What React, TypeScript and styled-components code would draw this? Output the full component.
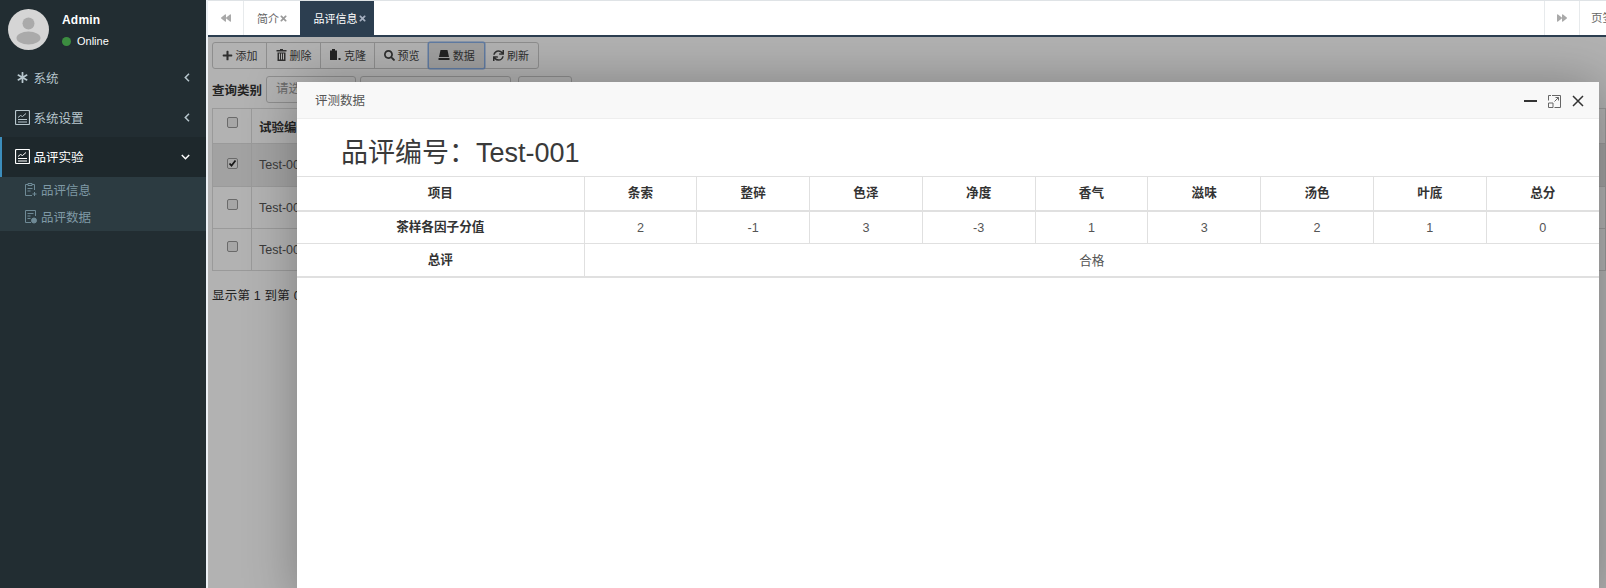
import React from "react";
import styled, { createGlobalStyle } from "styled-components";
import { FaBackward, FaForward, FaTimes, FaPlus, FaSearch, FaSync, FaAsterisk } from "react-icons/fa";

const FONT = `"Liberation Sans", "Noto Sans CJK SC", sans-serif`;

const Global = createGlobalStyle`
  html, body { margin: 0; padding: 0; height: 100%; overflow: hidden; background: #fff; }
  body { font-family: ${FONT}; font-size: 12.5px; color: #333; }
  #root { height: 100%; }
  * { box-sizing: border-box; }
`;

const Page = styled.div`
  display: flex;
  width: 1606px;
  height: 588px;
  overflow: hidden;
  background: #ecf0f5;
`;

const Sidebar = styled.aside`
  width: 206px;
  flex: none;
  background: #222d32;
  color: #b8c7ce;
`;

const UserPanel = styled.div`
  display: flex;
  height: 58px;
  padding: 9px 8px;
  gap: 13px;
`;

const Avatar = styled.svg`
  width: 41px;
  height: 41px;
  flex: none;
`;

const UserInfo = styled.div`
  padding-top: 4px;
  color: #fff;
`;

const UserName = styled.div`
  font-size: 12px;
  font-weight: 700;
  letter-spacing: 0.2px;
  line-height: 14px;
`;

const UserStatus = styled.div`
  display: flex;
  align-items: center;
  gap: 6px;
  font-size: 11px;
  line-height: 14px;
  margin-top: 7px;
`;

const Dot = styled.span`
  width: 9px;
  height: 9px;
  border-radius: 50%;
  background: #3c8d40;
`;

const MenuRow = styled.div<{ $active?: boolean }>`
  display: flex;
  align-items: center;
  height: 39.5px;
  padding: 0 16px 0 13px;
  font-size: 12.5px;
  color: ${(p) => (p.$active ? "#fff" : "#b8c7ce")};
  background: ${(p) => (p.$active ? "#1e282c" : "transparent")};
  border-left: 2px solid ${(p) => (p.$active ? "#3c8dbc" : "transparent")};
`;

const MenuIcon = styled.span`
  width: 18.5px;
  height: 16px;
  display: flex;
  align-items: center;
  flex: none;
`;

const SnowIcon = styled(FaAsterisk)`
  margin-left: 2px;
  font-size: 11px;
`;

const MenuLabel = styled.span`
  flex: 1;
`;

const SubMenu = styled.div`
  background: #2c3b41;
`;

const SubRow = styled.div`
  display: flex;
  align-items: center;
  height: 27px;
  padding: 0 0 1px 24px;
  gap: 4px;
  font-size: 12.5px;
  color: #7f99a5;
`;

const Main = styled.main`
  flex: 1;
  min-width: 0;
  margin-left: 2px;
  display: flex;
  flex-direction: column;
  background: #fff;
`;

const TabBar = styled.div`
  display: flex;
  height: 37px;
  flex: none;
  background: #fff;
  border-top: 1px solid #dfe3e6;
  border-bottom: 2px solid #2c3e50;
`;

const TabArrow = styled.div`
  width: 36px;
  flex: none;
  display: flex;
  align-items: center;
  justify-content: center;
  color: #a9a9a9;
  font-size: 10px;
  border-right: 1px solid #e7eaec;
`;

const Tab = styled.div<{ $active?: boolean }>`
  display: flex;
  align-items: center;
  padding: 0 ${(p) => (p.$active ? 7.5 : 11.5)}px 0 ${(p) => (p.$active ? 14 : 13)}px;
  font-size: 11px;
  color: ${(p) => (p.$active ? "#fff" : "#666")};
  background: ${(p) => (p.$active ? "#2c3e50" : "#fff")};
  svg { color: ${(p) => (p.$active ? "#a7b1c2" : "#999")}; font-size: 9px; }
`;

const TabSpacer = styled.div`
  flex: 1;
`;

const TabEnd = styled(TabArrow)`
  border-left: 1px solid #e7eaec;
`;

const TabText = styled.div`
  width: 26px;
  flex: none;
  padding-left: 11px;
  line-height: 35px;
  font-size: 11.5px;
  color: #666;
  white-space: nowrap;
  overflow: hidden;
`;

const Content = styled.div`
  position: relative;
  flex: 1;
  min-height: 0;
  overflow: hidden;
  background: #fff;
  padding: 5px 0 0 4px;
`;

const Shade = styled.div`
  position: absolute;
  inset: 0;
  z-index: 2;
  background: rgba(0, 0, 0, 0.3);
`;

const Toolbar = styled.div`
  display: flex;
`;

const ToolButton = styled.div<{ $focus?: boolean }>`
  display: flex;
  align-items: center;
  justify-content: center;
  gap: 3px;
  width: ${(p) => (p.$focus ? 56.5 : 55)}px;
  height: 27px;
  padding-bottom: 1px;
  margin-left: -1px;
  font-size: 11px;
  color: #444;
  border: 1px solid ${(p) => (p.$focus ? "#8ab0e8" : "#ccc")};
  background: ${(p) => (p.$focus ? "#e6e6e6" : "#fff")};
  box-shadow: ${(p) => (p.$focus ? "0 0 0 0.5px #8ab0e8" : "none")};
  border-radius: ${(p) => (p.$focus ? "2px" : "0")};
  position: relative;
  z-index: ${(p) => (p.$focus ? 1 : 0)};
  &:first-child { margin-left: 0; border-radius: 3px 0 0 3px; }
  &:last-child { border-radius: 0 3px 3px 0; }
  svg { font-size: 11px; flex: none; }
`;

const FilterRow = styled.div`
  display: flex;
  align-items: center;
  gap: 4px;
  margin-top: 7px;
  font-size: 12.5px;
  font-weight: 700;
`;

const FilterBox = styled.div<{ $w: number }>`
  width: ${(p) => p.$w}px;
  height: 27px;
  padding: 0 9px;
  border: 1px solid #ccc;
  border-radius: 3px;
  background: #fff;
  color: #999;
  font-weight: 400;
  line-height: 25px;
  &:last-child { margin-left: 3px; }
`;

const BackTable = styled.table`
  border-collapse: collapse;
  margin-top: 5px;
  width: 100%;
  font-size: 12.5px;
  td, th { border: 1px solid #ddd; padding: 0; text-align: left; }
  th { height: 35px; }
  td { height: 42px; }
  tbody tr:first-child td { height: 43px; }
`;

const BackRow = styled.tr<{ $selected?: boolean }>`
  background: ${(p) => (p.$selected ? "#e8e8e8" : "#fff")};
`;

const CheckCell = styled.td`
  width: 39px;
  text-align: center !important;
`;

const CheckHead = styled.th`
  width: 39px;
  text-align: center !important;
`;

const TextHead = styled.th`
  padding-left: 7px !important;
`;

const TextCell = styled.td`
  padding-left: 7px !important;
  color: #555;
`;

const Check = styled.span`
  display: inline-flex;
  align-items: center;
  justify-content: center;
  width: 11px;
  height: 11px;
  margin-bottom: 4px;
  background: #eee;
  border: 1px solid #999;
  border-radius: 2px;
`;

const Foot = styled.div`
  margin-top: 18px;
  font-size: 12.5px;
  line-height: 15px;
  letter-spacing: 0.2px;
`;

const Modal = styled.section`
  position: absolute;
  z-index: 3;
  left: 89px;
  top: 45px;
  width: 1302px;
  height: 520px;
  background: #fff;
  box-shadow: 1px 1px 50px rgba(0, 0, 0, 0.3);
`;

const ModalHead = styled.header`
  display: flex;
  align-items: center;
  justify-content: space-between;
  height: 37px;
  padding: 0 14px 1px 18px;
  background: #f8f8f8;
  border-bottom: 1px solid #eee;
  font-size: 12.5px;
  color: #555;
`;

const ModalTools = styled.div`
  display: flex;
  align-items: center;
  gap: 10px;
  margin-top: 3px;
`;

const ModalTitle = styled.h1`
  margin: 0;
  padding-left: 44px;
  height: 57px;
  line-height: 69px;
  font-size: 27px;
  font-weight: 400;
  color: #3a3a3a;
`;

const DataTable = styled.table`
  border-collapse: collapse;
  width: 100%;
  table-layout: fixed;
  font-size: 12.6px;
  color: #555;
  th, td {
    border: 1px solid #e0e0e0;
    text-align: center;
    height: 33px;
    padding: 0;
  }
  th { color: #333; padding-bottom: 3px; }
  th:first-child, td:first-child { border-left: 0; }
  th:last-child, td:last-child { border-right: 0; }
  thead th { border-bottom-width: 2px; height: 34px; }
  tbody tr:first-child td { padding-top: 1px; }
  tbody tr:last-child th, tbody tr:last-child td { border-bottom-width: 2px; }
`;

const HeadCol = styled.col`
  width: 287px;
`;

const HeadCell = styled.th``;

const Avatar0 = () => (
  <Avatar viewBox="0 0 41 41">
    <circle cx="20.5" cy="20.5" r="20.5" fill="#d5d5d5" />
    <circle cx="20.5" cy="14.5" r="6" fill="#aaa" />
    <ellipse cx="20.5" cy="29" rx="12" ry="6.5" fill="#aaa" />
  </Avatar>
);

const ChartIcon = ({ c }: { c: string }) => (
  <svg width="15" height="15" viewBox="0 0 15 15" fill="none" stroke={c}>
    <rect x="0.5" y="0.5" width="14" height="14" rx="1" strokeWidth="1.2" />
    <path d="M3 7.500l2.500-2 2 1L11 3.500M3 9.500h9M3 12h9" />
  </svg>
);

const ChevronLeft = () => (
  <svg width="6" height="9" viewBox="0 0 6 9" fill="none" stroke="currentColor" strokeWidth="1.500">
    <path d="M5 .800L1.300 4.500 5 8.200" />
  </svg>
);

const ChevronDown = () => (
  <svg width="9" height="6" viewBox="0 0 9 6" fill="none" stroke="currentColor" strokeWidth="1.500">
    <path d="M.8 1l3.700 3.700L8.200 1" />
  </svg>
);

const ClipIcon = () => (
  <svg width="13" height="15" viewBox="0 0 13 15" fill="none" stroke="#6f8a96">
    <path d="M8 13.500H1.500v-11H4M8 2.500h2.500V8M4 1.500h4v2H4z" />
    <path d="M3.500 6.500h5M3.500 9h3M10.500 10v4M8.500 12h4" />
  </svg>
);

const DataIcon = () => (
  <svg width="13" height="15" viewBox="0 0 13 15" fill="none" stroke="#6f8a96">
    <path d="M11.500 7V1.500h-10v12H7" />
    <path d="M3.500 4.500h6M3.500 7h3M3.500 9.500h3" />
    <circle cx="10" cy="11.500" r="2.500" fill="#6f8a96" />
  </svg>
);

const TrashIcon = () => (
  <svg width="11" height="12" viewBox="0 0 11 12" fill="#444">
    <path d="M4 0h3v1h3.500v1.500H.5V1H4z" />
    <path d="M1.500 3.500h8V12h-8zM3 4.500v6h1v-6zM5 4.500v6h1v-6zM7 4.500v6h1v-6z" fillRule="evenodd" />
  </svg>
);

const PasteIcon = () => (
  <svg width="12" height="12" viewBox="0 0 12 12" fill="#333">
    <path d="M3 0h3v1.500h2V11H1V1.500h2z" />
    <rect x="9.500" y="9" width="2" height="2" />
  </svg>
);

const DriveIcon = () => (
  <svg width="12" height="12" viewBox="0 0 12 12" fill="#333">
    <path d="M2.500 1h7l1.500 7H1z" />
    <path d="M.5 9h11v2H.5z" />
  </svg>
);

const CheckMark = () => (
  <svg width="9" height="9" viewBox="0 0 9 9" fill="none" stroke="#222" strokeWidth="1.800">
    <path d="M1.500 4.500l2 2.200L7.500 1.500" />
  </svg>
);

const Min = () => (
  <svg width="14" height="14" viewBox="0 0 14 14"><rect x="0" y="6" width="13" height="2" fill="#333" /></svg>
);
const Max = () => (
  <svg width="13" height="13" viewBox="0 0 13 13" fill="none" stroke="#666">
    <path d="M4 .5h8.500v12H6.500M.5 5.500V.5H3M.5 8h4.500v4.500H.5zM6.500 6.500l4-4M7.500 2.500h3v3" />
  </svg>
);
const Close = () => (
  <svg width="14" height="14" viewBox="0 0 14 14" fill="none" stroke="#333" strokeWidth="1.500">
    <path d="M2 2l10 10M12 2L2 12" />
  </svg>
);

const COLS = ["条索", "整碎", "色泽", "净度", "香气", "滋味", "汤色", "叶底", "总分"];
const VALUES = [2, -1, 3, -3, 1, 3, 2, 1, 0];

export default function App() {
  return (
    <Page>
      <Global />
      <Sidebar>
        <UserPanel>
          <Avatar0 />
          <UserInfo>
            <UserName>Admin</UserName>
            <UserStatus><Dot />Online</UserStatus>
          </UserInfo>
        </UserPanel>
        <MenuRow>
          <MenuIcon><SnowIcon /></MenuIcon>
          <MenuLabel>系统</MenuLabel>
          <ChevronLeft />
        </MenuRow>
        <MenuRow>
          <MenuIcon><ChartIcon c="#b8c7ce" /></MenuIcon>
          <MenuLabel>系统设置</MenuLabel>
          <ChevronLeft />
        </MenuRow>
        <MenuRow $active>
          <MenuIcon><ChartIcon c="#fff" /></MenuIcon>
          <MenuLabel>品评实验</MenuLabel>
          <ChevronDown />
        </MenuRow>
        <SubMenu>
          <SubRow><ClipIcon />品评信息</SubRow>
          <SubRow><DataIcon />品评数据</SubRow>
        </SubMenu>
      </Sidebar>
      <Main>
        <TabBar>
          <TabArrow><FaBackward /></TabArrow>
          <Tab>简介<FaTimes /></Tab>
          <Tab $active>品评信息<FaTimes /></Tab>
          <TabSpacer />
          <TabEnd><FaForward /></TabEnd>
          <TabText>页签操作</TabText>
        </TabBar>
        <Content>
          <Toolbar>
            <ToolButton><FaPlus />添加</ToolButton>
            <ToolButton><TrashIcon />删除</ToolButton>
            <ToolButton><PasteIcon />克隆</ToolButton>
            <ToolButton><FaSearch />预览</ToolButton>
            <ToolButton $focus><DriveIcon />数据</ToolButton>
            <ToolButton><FaSync />刷新</ToolButton>
          </Toolbar>
          <FilterRow>
            查询类别
            <FilterBox $w={90}>请选择</FilterBox>
            <FilterBox $w={151} />
            <FilterBox $w={54} />
          </FilterRow>
          <BackTable>
            <thead>
              <tr>
                <CheckHead><Check /></CheckHead>
                <TextHead>试验编号</TextHead>
              </tr>
            </thead>
            <tbody>
              <BackRow $selected>
                <CheckCell><Check><CheckMark /></Check></CheckCell>
                <TextCell>Test-001</TextCell>
              </BackRow>
              <BackRow>
                <CheckCell><Check /></CheckCell>
                <TextCell>Test-002</TextCell>
              </BackRow>
              <BackRow>
                <CheckCell><Check /></CheckCell>
                <TextCell>Test-003</TextCell>
              </BackRow>
            </tbody>
          </BackTable>
          <Foot>显示第 1 到第 0 条记录</Foot>
          <Shade />
          <Modal>
            <ModalHead>
              评测数据
              <ModalTools><Min /><Max /><Close /></ModalTools>
            </ModalHead>
            <ModalTitle>品评编号：Test-001</ModalTitle>
            <DataTable>
              <colgroup>
                <HeadCol />
              </colgroup>
              <thead>
                <tr>
                  <HeadCell>项目</HeadCell>
                  {COLS.map((c) => <HeadCell key={c}>{c}</HeadCell>)}
                </tr>
              </thead>
              <tbody>
                <tr>
                  <HeadCell>茶样各因子分值</HeadCell>
                  {VALUES.map((v, i) => <td key={i}>{v}</td>)}
                </tr>
                <tr>
                  <HeadCell>总评</HeadCell>
                  <td colSpan={9}>合格</td>
                </tr>
              </tbody>
            </DataTable>
          </Modal>
        </Content>
      </Main>
    </Page>
  );
}
